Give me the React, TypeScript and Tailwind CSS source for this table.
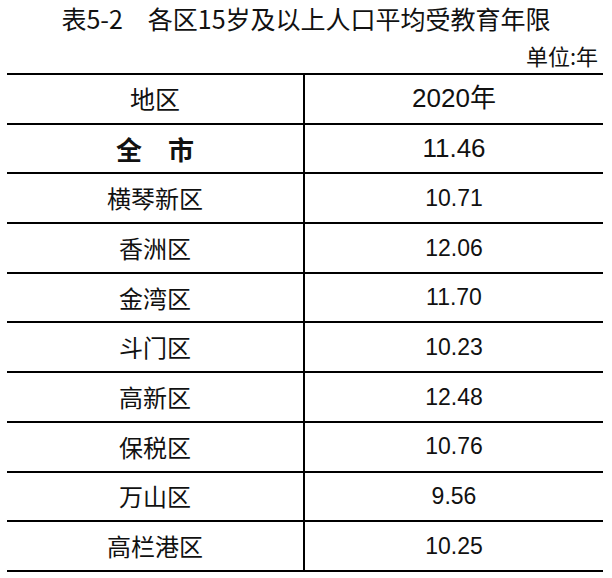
const rows: [string, string][] = [
  ["横琴新区", "10.71"],
  ["香洲区", "12.06"],
  ["金湾区", "11.70"],
  ["斗门区", "10.23"],
  ["高新区", "12.48"],
  ["保税区", "10.76"],
  ["万山区", "9.56"],
  ["高栏港区", "10.25"],
];

const cjk = "font-['Noto_Sans_CJK_SC',sans-serif]";
const num = "font-['Liberation_Sans','Noto_Sans_CJK_SC',sans-serif]";

export default function App() {
  return (
    <div className="w-[612px] h-[578px] bg-white text-[#111]">
      <div className={`${cjk} h-[36px] flex items-center justify-center text-[25px] leading-none`}>
        表5-2　各区15岁及以上人口平均受教育年限
      </div>
      <div className={`${cjk} h-[37px] flex items-center justify-end pr-[14px] text-[22px] leading-none`}>
        单位:年
      </div>
      <div className="ml-[7px] w-[596px] border-t-2 border-black">
        <div className="grid grid-cols-2 h-[49.7px] border-b-2 border-black">
          <div className={`${cjk} flex items-center justify-center border-r-2 border-black text-[25px]`}>地区</div>
          <div className={`${num} flex items-center justify-center text-[26px]`}>2020年</div>
        </div>
        <div className="grid grid-cols-2 h-[49.7px] border-b-2 border-black">
          <div className={`${cjk} flex items-center justify-center border-r-2 border-black text-[26px] font-bold`}>
            全　市
          </div>
          <div className={`${num} flex items-center justify-center text-[26px]`}>11.46</div>
        </div>
        {rows.map(([name, val]) => (
          <div key={name} className="grid grid-cols-2 h-[49.7px] border-b-2 border-black">
            <div className={`${cjk} flex items-center justify-center border-r-2 border-black text-[24px]`}>{name}</div>
            <div className={`${num} flex items-center justify-center text-[23px]`}>{val}</div>
          </div>
        ))}
      </div>
    </div>
  );
}
